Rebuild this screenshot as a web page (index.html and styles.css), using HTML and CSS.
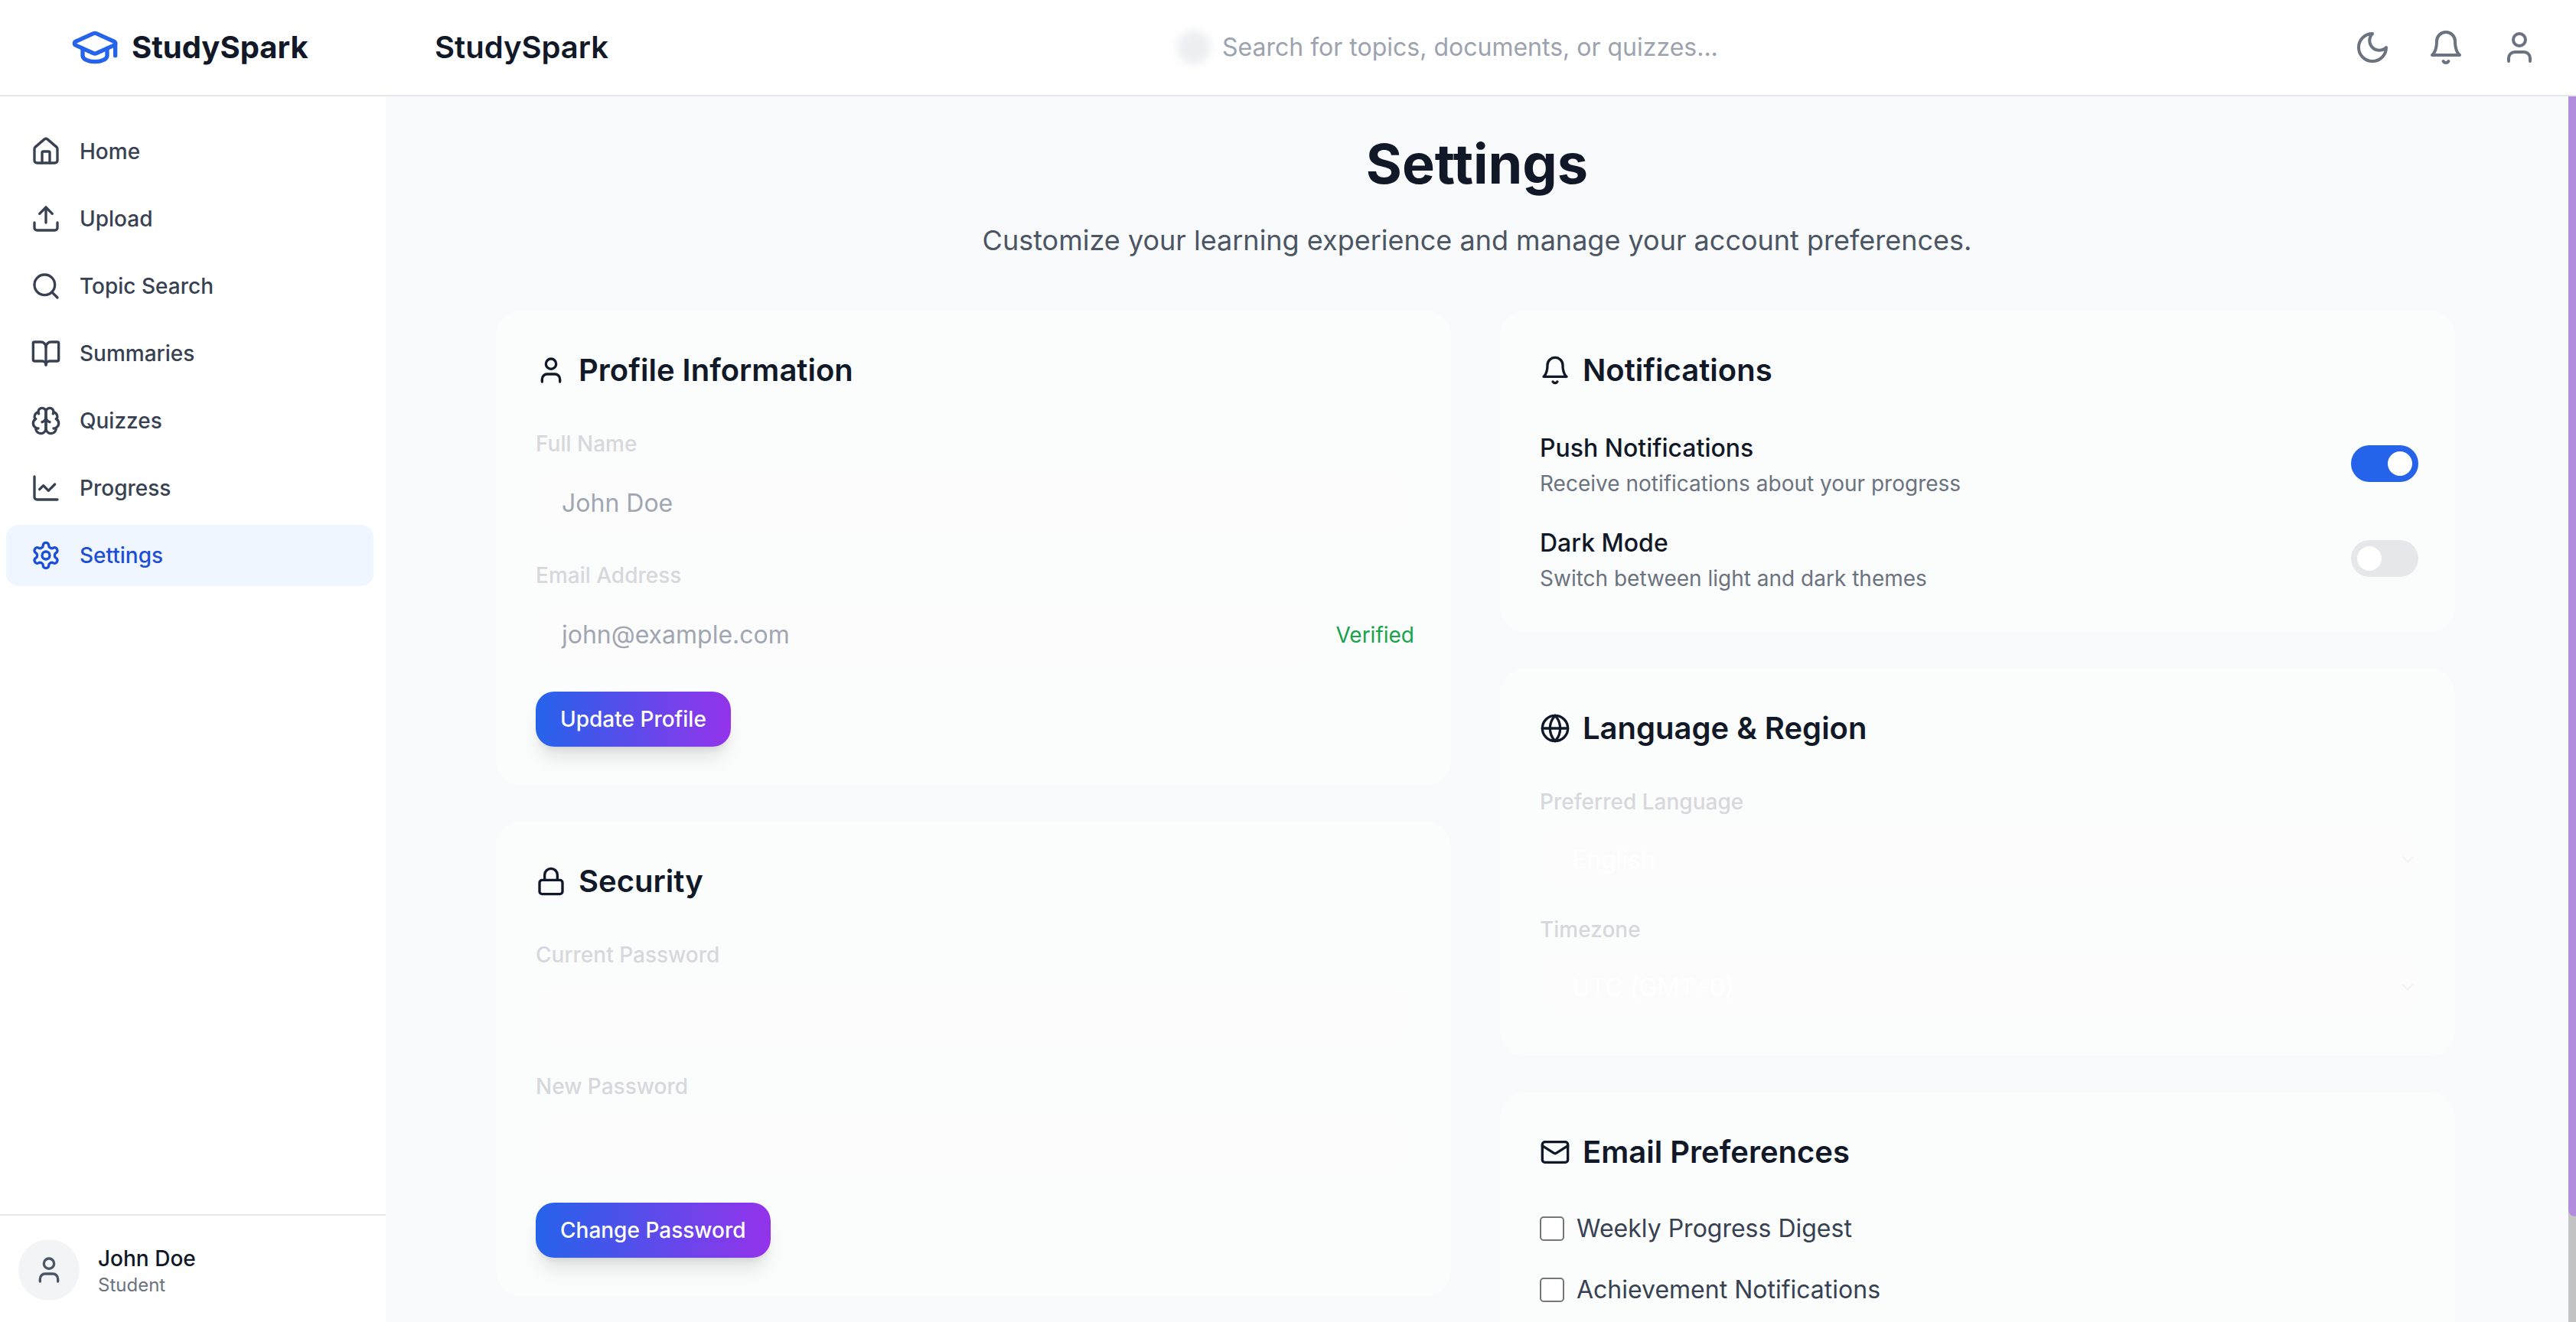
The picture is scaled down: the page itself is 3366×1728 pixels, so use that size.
FILE: index.html
```html
<!DOCTYPE html>
<html lang="en">
<head>
<meta charset="utf-8">
<title>StudySpark Settings</title>
<link rel="stylesheet" href="styles.css">
</head>
<body>
<header class="topbar">
  <div class="brand">
    <svg class="brand-icon" viewBox="0 0 24 24"><path d="M21.42 10.922a1 1 0 0 0-.019-1.838L12.83 5.18a2 2 0 0 0-1.66 0L2.6 9.08a1 1 0 0 0 0 1.832l8.57 3.908a2 2 0 0 0 1.66 0z"/><path d="M22 10v6"/><path d="M6 12.5V16a6 3 0 0 0 12 0v-3.5"/></svg>
    <span class="brand-name">StudySpark</span>
  </div>
  <div class="page-brand">StudySpark</div>
  <div class="search">
    <span class="search-blur"></span>
    <span class="search-text">Search for topics, documents, or quizzes...</span>
  </div>
  <div class="top-icons">
    <svg class="ico ico-top" viewBox="0 0 24 24"><path d="M12 3a6 6 0 0 0 9 9 9 9 0 1 1-9-9Z"/></svg>
    <svg class="ico ico-top" viewBox="0 0 24 24"><path d="M6 8a6 6 0 0 1 12 0c0 7 3 9 3 9H3s3-2 3-9"/><path d="M10.3 21a1.94 1.94 0 0 0 3.4 0"/></svg>
    <svg class="ico ico-top" viewBox="0 0 24 24"><path d="M19 21v-2a4 4 0 0 0-4-4H9a4 4 0 0 0-4 4v2"/><circle cx="12" cy="7" r="4"/></svg>
  </div>
</header>
<div class="shell">
  <aside class="sidebar">
    <nav class="nav">
      <a class="nav-item"><svg class="ico" viewBox="0 0 24 24"><path d="M15 21v-8a1 1 0 0 0-1-1h-4a1 1 0 0 0-1 1v8"/><path d="M3 10a2 2 0 0 1 .709-1.528l7-5.999a2 2 0 0 1 2.582 0l7 5.999A2 2 0 0 1 21 10v9a2 2 0 0 1-2 2H5a2 2 0 0 1-2-2z"/></svg>Home</a>
      <a class="nav-item"><svg class="ico" viewBox="0 0 24 24"><path d="M21 15v4a2 2 0 0 1-2 2H5a2 2 0 0 1-2-2v-4"/><polyline points="17 8 12 3 7 8"/><line x1="12" x2="12" y1="3" y2="15"/></svg>Upload</a>
      <a class="nav-item"><svg class="ico" viewBox="0 0 24 24"><circle cx="11" cy="11" r="8"/><path d="m21 21-4.3-4.3"/></svg>Topic Search</a>
      <a class="nav-item"><svg class="ico" viewBox="0 0 24 24"><path d="M12 7v14"/><path d="M3 18a1 1 0 0 1-1-1V4a1 1 0 0 1 1-1h5a4 4 0 0 1 4 4 4 4 0 0 1 4-4h5a1 1 0 0 1 1 1v13a1 1 0 0 1-1 1h-6a3 3 0 0 0-3 3 3 3 0 0 0-3-3z"/></svg>Summaries</a>
      <a class="nav-item"><svg class="ico" viewBox="0 0 24 24"><path d="M12 5a3 3 0 1 0-5.997.125 4 4 0 0 0-2.526 5.77 4 4 0 0 0 .556 6.588A4 4 0 1 0 12 18Z"/><path d="M12 5a3 3 0 1 1 5.997.125 4 4 0 0 1 2.526 5.77 4 4 0 0 1-.556 6.588A4 4 0 1 1 12 18Z"/><path d="M15 13a4.5 4.5 0 0 1-3-4 4.5 4.5 0 0 1-3 4"/><path d="M17.599 6.5a3 3 0 0 0 .399-1.375"/><path d="M6.003 5.125A3 3 0 0 0 6.401 6.5"/><path d="M3.477 10.896a4 4 0 0 1 .585-.396"/><path d="M19.938 10.5a4 4 0 0 1 .585.396"/><path d="M6 18a4 4 0 0 1-1.967-.516"/><path d="M19.967 17.484A4 4 0 0 1 18 18"/></svg>Quizzes</a>
      <a class="nav-item"><svg class="ico" viewBox="0 0 24 24"><path d="M3 3v16a2 2 0 0 0 2 2h16"/><path d="m19 9-5 5-4-4-3 3"/></svg>Progress</a>
      <a class="nav-item active"><svg class="ico" viewBox="0 0 24 24"><path d="M12.22 2h-.44a2 2 0 0 0-2 2v.18a2 2 0 0 1-1 1.73l-.43.25a2 2 0 0 1-2 0l-.15-.08a2 2 0 0 0-2.73.73l-.22.38a2 2 0 0 0 .73 2.73l.15.1a2 2 0 0 1 1 1.72v.51a2 2 0 0 1-1 1.74l-.15.09a2 2 0 0 0-.73 2.73l.22.38a2 2 0 0 0 2.73.73l.15-.08a2 2 0 0 1 2 0l.43.25a2 2 0 0 1 1 1.73V20a2 2 0 0 0 2 2h.44a2 2 0 0 0 2-2v-.18a2 2 0 0 1 1-1.73l.43-.25a2 2 0 0 1 2 0l.15.08a2 2 0 0 0 2.73-.73l.22-.39a2 2 0 0 0-.73-2.73l-.15-.08a2 2 0 0 1-1-1.74v-.5a2 2 0 0 1 1-1.74l.15-.09a2 2 0 0 0 .73-2.73l-.22-.38a2 2 0 0 0-2.73-.73l-.15.08a2 2 0 0 1-2 0l-.43-.25a2 2 0 0 1-1-1.73V4a2 2 0 0 0-2-2z"/><circle cx="12" cy="12" r="3"/></svg>Settings</a>
    </nav>
    <div class="user">
      <span class="avatar"><svg class="ico" viewBox="0 0 24 24"><path d="M19 21v-2a4 4 0 0 0-4-4H9a4 4 0 0 0-4 4v2"/><circle cx="12" cy="7" r="4"/></svg></span>
      <div class="user-text">
        <div class="user-name">John Doe</div>
        <div class="user-role">Student</div>
      </div>
    </div>
  </aside>
  <main class="main">
    <h1 class="title">Settings</h1>
    <p class="subtitle">Customize your learning experience and manage your account preferences.</p>
    <div class="grid">
      <div class="col">
        <section class="card">
          <h2 class="card-title"><svg class="ico" viewBox="0 0 24 24"><path d="M19 21v-2a4 4 0 0 0-4-4H9a4 4 0 0 0-4 4v2"/><circle cx="12" cy="7" r="4"/></svg>Profile Information</h2>
          <div class="field">
            <label class="label">Full Name</label>
            <div class="input">John Doe</div>
          </div>
          <div class="field">
            <label class="label">Email Address</label>
            <div class="input-row">
              <div class="input grow">john@example.com</div>
              <span class="verified">Verified</span>
            </div>
          </div>
          <button class="btn">Update Profile</button>
        </section>
        <section class="card">
          <h2 class="card-title"><svg class="ico" viewBox="0 0 24 24"><rect width="18" height="11" x="3" y="11" rx="2" ry="2"/><path d="M7 11V7a5 5 0 0 1 10 0v4"/></svg>Security</h2>
          <div class="field">
            <label class="label">Current Password</label>
            <div class="input">&nbsp;</div>
          </div>
          <div class="field">
            <label class="label">New Password</label>
            <div class="input">&nbsp;</div>
          </div>
          <button class="btn">Change Password</button>
        </section>
      </div>
      <div class="col">
        <section class="card">
          <h2 class="card-title"><svg class="ico" viewBox="0 0 24 24"><path d="M6 8a6 6 0 0 1 12 0c0 7 3 9 3 9H3s3-2 3-9"/><path d="M10.3 21a1.94 1.94 0 0 0 3.4 0"/></svg>Notifications</h2>
          <div class="toggles">
            <div class="toggle-row">
              <div class="toggle-text">
                <div class="toggle-name">Push Notifications</div>
                <div class="toggle-desc">Receive notifications about your progress</div>
              </div>
              <span class="switch on"><span class="knob"></span></span>
            </div>
            <div class="toggle-row">
              <div class="toggle-text">
                <div class="toggle-name">Dark Mode</div>
                <div class="toggle-desc">Switch between light and dark themes</div>
              </div>
              <span class="switch"><span class="knob"></span></span>
            </div>
          </div>
        </section>
        <section class="card">
          <h2 class="card-title"><svg class="ico" viewBox="0 0 24 24"><circle cx="12" cy="12" r="10"/><path d="M12 2a14.5 14.5 0 0 0 0 20 14.5 14.5 0 0 0 0-20"/><path d="M2 12h20"/></svg>Language &amp; Region</h2>
          <div class="select-field">
            <label class="label">Preferred Language</label>
            <div class="select">English<svg class="chev" viewBox="0 0 24 24"><path d="m6 9 6 6 6-6"/></svg></div>
          </div>
          <div class="select-field">
            <label class="label">Timezone</label>
            <div class="select">UTC (GMT+0)<svg class="chev" viewBox="0 0 24 24"><path d="m6 9 6 6 6-6"/></svg></div>
          </div>
        </section>
        <section class="card">
          <h2 class="card-title"><svg class="ico" viewBox="0 0 24 24"><rect width="20" height="16" x="2" y="4" rx="2"/><path d="m22 7-8.97 5.7a1.94 1.94 0 0 1-2.06 0L2 7"/></svg>Email Preferences</h2>
          <div class="checks">
            <div class="check-row"><span class="checkbox"></span>Weekly Progress Digest</div>
            <div class="check-row"><span class="checkbox"></span>Achievement Notifications</div>
          </div>
        </section>
      </div>
    </div>
  </main>
  <div class="scrollbar"><div class="thumb"></div></div>
</div>
</body>
</html>
```
FILE: styles.css
```css
* { box-sizing: border-box; }
html, body { margin: 0; height: 100%; overflow: hidden; }
body {
  font-family: Inter, "Liberation Sans", sans-serif;
  color: #111827;
  background: #fff;
  display: flex;
  flex-direction: column;
}
.ico {
  width: 40px; height: 40px; flex: none;
  fill: none; stroke: currentColor; stroke-width: 2;
  stroke-linecap: round; stroke-linejoin: round;
}
.topbar {
  height: 126px; flex: none;
  display: flex; align-items: center;
  border-bottom: 2px solid #e5e7eb;
  background: #fff;
}
.brand { width: 504px; flex: none; display: flex; align-items: center; gap: 16px; padding-left: 92px; }
.brand-icon {
  width: 64px; height: 64px; flex: none;
  fill: none; stroke: #2563eb; stroke-width: 2;
  stroke-linecap: round; stroke-linejoin: round;
}
.brand-name { font-size: 40px; line-height: 56px; font-weight: 700; }
.page-brand { width: 1034px; flex: none; padding-left: 64px; font-size: 40px; line-height: 56px; font-weight: 600; }
.search { display: flex; align-items: center; gap: 15px; flex: 1; }
.search-blur { width: 44px; height: 44px; border-radius: 50%; background: #e5e7eb; filter: blur(6px); opacity: .7; }
.search-text { font-size: 32px; line-height: 48px; color: #9ca3af; }
.top-icons { display: flex; gap: 48px; padding-right: 50px; color: #6b7280; }
.ico-top { width: 48px; height: 48px; }

.shell { flex: 1; min-height: 0; display: flex; }
.sidebar { width: 504px; flex: none; display: flex; flex-direction: column; background: #fff; }
.nav { flex: 1; display: flex; flex-direction: column; gap: 8px; padding: 32px 16px 0 8px; }
.nav-item {
  height: 80px; display: flex; align-items: center; gap: 24px;
  padding: 0 32px; border-radius: 16px;
  font-size: 28px; font-weight: 500; color: #374151;
}
.nav-item.active { background: #eff6ff; color: #1d4ed8; }
.user { height: 141px; flex: none; display: flex; align-items: center; gap: 24px; padding: 31px 24px 28px; border-top: 2px solid #e5e7eb; }
.avatar { width: 80px; height: 80px; border-radius: 50%; background: #f3f4f6; color: #4b5563; display: flex; align-items: center; justify-content: center; }
.user-text { padding-top: 3px; }
.user-name { font-size: 28px; line-height: 36px; font-weight: 500; color: #111827; }
.user-role { margin-top: 1px; font-size: 24px; line-height: 32px; color: #6b7280; }

.main { flex: 1; min-width: 0; background: #f9fafb; overflow: hidden; padding: 48px 0 0 144px; }
.title { margin: 0 0 32px; width: 2564px; font-size: 72px; line-height: 80px; font-weight: 700; text-align: center; color: #111827; }
.subtitle { margin: 0 0 64px; width: 2564px; font-size: 36px; line-height: 56px; text-align: center; color: #4b5563; }
.grid { width: 2560px; display: grid; grid-template-columns: 1248px 1248px; gap: 64px; }
.col { display: flex; flex-direction: column; gap: 48px; }
.card { padding: 50px 48px 50px 52px; border-radius: 32px; background: #fbfcfc; }
.card-title { margin: 0 0 48px; display: flex; align-items: center; gap: 16px; font-size: 40px; line-height: 56px; font-weight: 600; color: #111827; }
.field { margin-bottom: 34px; }
.label { display: block; margin-bottom: 18px; font-size: 28px; line-height: 40px; font-weight: 500; color: #d6d8dd; }
.input { height: 80px; margin: 0 12px 0 2px; padding: 16px 32px; border-radius: 24px; background: #fcfcfd; font-size: 32px; line-height: 48px; color: #a0a6b2; }
.input-row { display: flex; align-items: center; gap: 16px; }
.grow { flex: 1; }
.verified { font-size: 28px; line-height: 40px; font-weight: 400; color: #16a34a; }
.btn {
  display: block; height: 72px; padding: 0 32px; border: 0; border-radius: 24px;
  background: linear-gradient(90deg, #2563eb, #9333ea);
  box-shadow: 0 20px 25px -5px rgba(0,0,0,.1), 0 8px 10px -6px rgba(0,0,0,.1);
  font-family: inherit; font-size: 28px; font-weight: 500; color: #fff;
}
.toggles { display: flex; flex-direction: column; gap: 32px; }
.toggle-row { display: flex; align-items: center; justify-content: space-between; height: 92px; }
.toggle-text { padding-top: 2px; }
.toggle-name { font-size: 32px; line-height: 48px; font-weight: 500; color: #111827; }
.toggle-desc { margin-top: 2px; font-size: 28px; line-height: 40px; color: #6b7280; }
.switch { width: 88px; height: 48px; padding: 8px; border-radius: 24px; background: #e5e7eb; display: flex; }
.switch.on { background: #2563eb; justify-content: flex-end; }
.knob { width: 32px; height: 32px; border-radius: 50%; background: #fff; }
.select-field { margin-bottom: 37px; }
.select-field:last-child { margin-bottom: 5px; }
.select-field .label { margin-bottom: 14px; }
.select { height: 76px; padding: 6px 0 0 42px; border-radius: 24px; background: #fcfcfc; display: flex; align-items: center; justify-content: space-between; font-size: 32px; color: #fff; }
.chev { width: 28px; height: 28px; fill: none; stroke: #f3f4f6; stroke-width: 2; }
.checks { display: flex; flex-direction: column; gap: 32px; }
.check-row { display: flex; align-items: center; gap: 16px; font-size: 32px; line-height: 48px; color: #374151; }
.checkbox { width: 32px; height: 32px; flex: none; border: 2px solid #767676; border-radius: 5px; background: #fff; }
.scrollbar { width: 10px; flex: none; background: #c4c4c4; }
.thumb { height: 1464px; background: #b28cdf; border-radius: 0 0 2px 10px; }
```
